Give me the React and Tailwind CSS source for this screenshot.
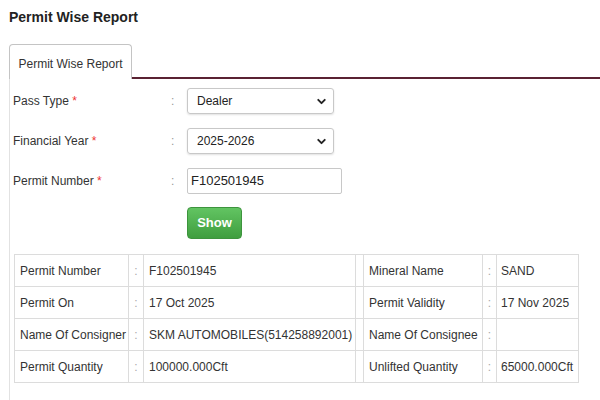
import { ChevronDown } from "lucide-react";

function Field({ label, children }) {
    return (
        <div className="flex items-center h-[26px]">
            <div className="w-[160px] pl-[2px] text-[12px]">
                {label} <span className="text-[#e33]">*</span>
            </div>
            <div className="w-[16px] text-[12px] text-[#999]">:</div>
            {children}
        </div>
    );
}

function Select({ value, width }) {
    return (
        <div
            className={`relative h-[26px] ${width} border border-[#c8c8c8] rounded-[3px] shadow-[0_1px_2px_rgba(0,0,0,0.12)] flex items-center pl-[9px] text-[12px] text-[#222]`}
        >
            {value}
            <ChevronDown size={13} strokeWidth={3.5} className="absolute right-[5px] top-[6px] text-[#222]" />
        </div>
    );
}

const rows = [
    ["Permit Number", "F102501945", "Mineral Name", "SAND"],
    ["Permit On", "17 Oct 2025", "Permit Validity", "17 Nov 2025"],
    ["Name Of Consigner", "SKM AUTOMOBILES(514258892001)", "Name Of Consignee", ""],
    ["Permit Quantity", "100000.000Cft", "Unlifted Quantity", "65000.000Cft"],
];

export default function App() {
    return (
        <div className="w-[600px] h-[400px] bg-white overflow-hidden font-['Liberation_Sans',Arial,sans-serif] text-[#333]">
            <h1 className="pl-[9px] pt-[9px] text-[14px] font-bold leading-[16px] text-[#222]">Permit Wise Report</h1>
            <div className="mt-[19px] ml-[9px] flex items-end">
                <div className="w-[123px] h-[35px] border border-b-0 border-[#c4c4c4] rounded-t-[4px] flex items-center justify-center pt-[3px] text-[12px]">
                    Permit Wise Report
                </div>
                <div className="flex-1 h-[2px] bg-[#5a2232]"></div>
            </div>
            <div className="ml-[9px] border-l border-[#e2e2e2] h-[400px] pt-[9px] pl-[1px]">
                <div className="flex flex-col gap-[14px]">
                    <Field label="Pass Type">
                        <Select value="Dealer" width="w-[147px]" />
                    </Field>
                    <Field label="Financial Year">
                        <Select value="2025-2026" width="w-[147px]" />
                    </Field>
                    <Field label="Permit Number">
                        <div className="h-[26px] w-[155px] border border-[#c8c8c8] rounded-[2px] flex items-center pl-[3px] text-[13px] text-[#222]">
                            F102501945
                        </div>
                    </Field>
                </div>
                <div className="ml-[176px] mt-[13px]">
                    <button className="w-[55px] h-[32px] rounded-[4px] bg-gradient-to-b from-[#62c462] to-[#3f9e3f] border border-[#3d943d] text-white font-bold text-[13px]">
                        Show
                    </button>
                </div>
                <table className="ml-[3px] mt-[15px] w-[564px] table-fixed border-collapse text-[12px]">
                    <colgroup>
                        <col className="w-[114px]" />
                        <col className="w-[15px]" />
                        <col className="w-[212px]" />
                        <col className="w-[8px]" />
                        <col className="w-[119px]" />
                        <col className="w-[14px]" />
                        <col className="w-[82px]" />
                    </colgroup>
                    <tbody>
                        {rows.map((r) => (
                            <tr key={r[0]} className="h-[32px]">
                                <td className="border border-[#dcdcdc] pl-[5px] whitespace-nowrap">{r[0]}</td>
                                <td className="border border-[#dcdcdc] text-center text-[#aaa]">:</td>
                                <td className="border border-[#dcdcdc] pl-[5px] whitespace-nowrap">{r[1]}</td>
                                <td className="border border-[#dcdcdc]"></td>
                                <td className="border border-[#dcdcdc] pl-[5px] whitespace-nowrap">{r[2]}</td>
                                <td className="border border-[#dcdcdc] text-center text-[#aaa]">:</td>
                                <td className="border border-[#dcdcdc] pl-[4px] whitespace-nowrap">{r[3]}</td>
                            </tr>
                        ))}
                    </tbody>
                </table>
            </div>
        </div>
    );
}
